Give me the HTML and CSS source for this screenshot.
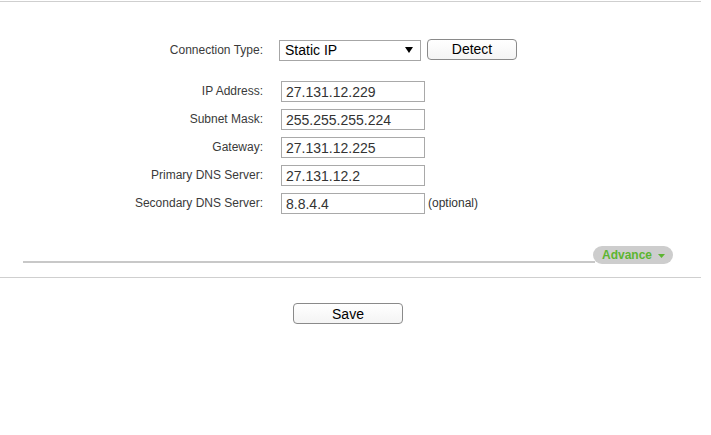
FILE: index.html
```html
<!DOCTYPE html>
<html>
<head>
<meta charset="utf-8">
<link rel="stylesheet" href="styles.css">
</head>
<body>
<div class="page">
  <div class="rule top"></div>
  <div class="form">
    <div class="row conn">
      <label class="lbl">Connection Type:</label>
      <div class="select"><span>Static IP</span>
        <svg class="caret" width="8" height="6" viewBox="0 0 8 6"><path d="M0 0 H8 L4 6 Z" fill="#000"/></svg>
      </div>
      <button class="btn detect">Detect</button>
    </div>
    <div class="fields">
      <div class="row field"><label class="lbl">IP Address:</label><div class="inp">27.131.12.229</div></div>
      <div class="row field"><label class="lbl">Subnet Mask:</label><div class="inp">255.255.255.224</div></div>
      <div class="row field"><label class="lbl">Gateway:</label><div class="inp">27.131.12.225</div></div>
      <div class="row field"><label class="lbl">Primary DNS Server:</label><div class="inp">27.131.12.2</div></div>
      <div class="row field"><label class="lbl">Secondary DNS Server:</label><div class="inp">8.8.4.4</div><span class="opt">(optional)</span></div>
    </div>
  </div>
  <div class="advbar">
    <div class="advline"></div>
    <div class="adv"><span>Advance</span>
      <svg class="advcaret" width="7" height="4" viewBox="0 0 7 4"><path d="M0 0 H7 L3.5 4 Z" fill="#5cb531"/></svg>
    </div>
  </div>
  <div class="rule"></div>
  <div class="actions"><button class="btn save">Save</button></div>
</div>
</body>
</html>
```
FILE: styles.css
```css
* { box-sizing: border-box; }
html, body { margin: 0; padding: 0; background: #fff; }
body { font-family: "Liberation Sans", Arial, sans-serif; color: #333; }
.page { width: 711px; height: 435px; }
.rule { width: 701px; height: 1px; background: #cfcfcf; }
.rule.top { margin-top: 1px; }
.form { padding-top: 36px; }
.row { display: flex; align-items: center; }
.lbl { width: 263px; text-align: right; font-size: 12px; color: #3a3a3a; flex: none; }
.conn { height: 23px; }
.select {
  margin-left: 16px; width: 142px; height: 21px; border: 1px solid #a6a6a6;
  display: flex; align-items: center; justify-content: space-between;
  padding: 0 7px 0 5px; font-size: 14px; color: #000; margin-top: 1px;
}
.caret { display: block; }
.btn {
  font-family: "Liberation Sans", Arial, sans-serif; font-size: 14px; color: #000;
  background: linear-gradient(#ffffff, #f4f4f4); border: 1px solid #8a8a8a; border-radius: 4px;
  padding: 0; height: 21px;
}
.detect { margin-left: 6px; width: 90px; margin-top: -1px; }
.fields { padding-top: 16px; }
.field { height: 28px; }
.inp {
  margin-left: 18px; width: 144px; height: 21px; border: 1px solid #a9a9a9;
  font-size: 14px; color: #333; padding: 1px 0 0 4px; line-height: 18px;
}
.opt { margin-left: 3px; font-size: 12px; color: #333; }
.advbar { margin-top: 29px; display: flex; align-items: flex-end; height: 18px; }
.advline { margin-left: 23px; width: 572px; height: 2px; background: #c8c8c8; margin-bottom: 1px; }
.adv {
  width: 80px; height: 18px; border-radius: 9px; background: #cdcdcd; margin-left: -2px;
  display: flex; align-items: center; padding-left: 9px; gap: 6px;
  font-size: 12px; font-weight: bold; color: #5cb531;
}
.advcaret { display: block; margin-top: 1px; }
.advbar + .rule { margin-top: 13px; }
.actions { padding-top: 25px; padding-left: 293px; }
.save { width: 110px; height: 21px; }
```
